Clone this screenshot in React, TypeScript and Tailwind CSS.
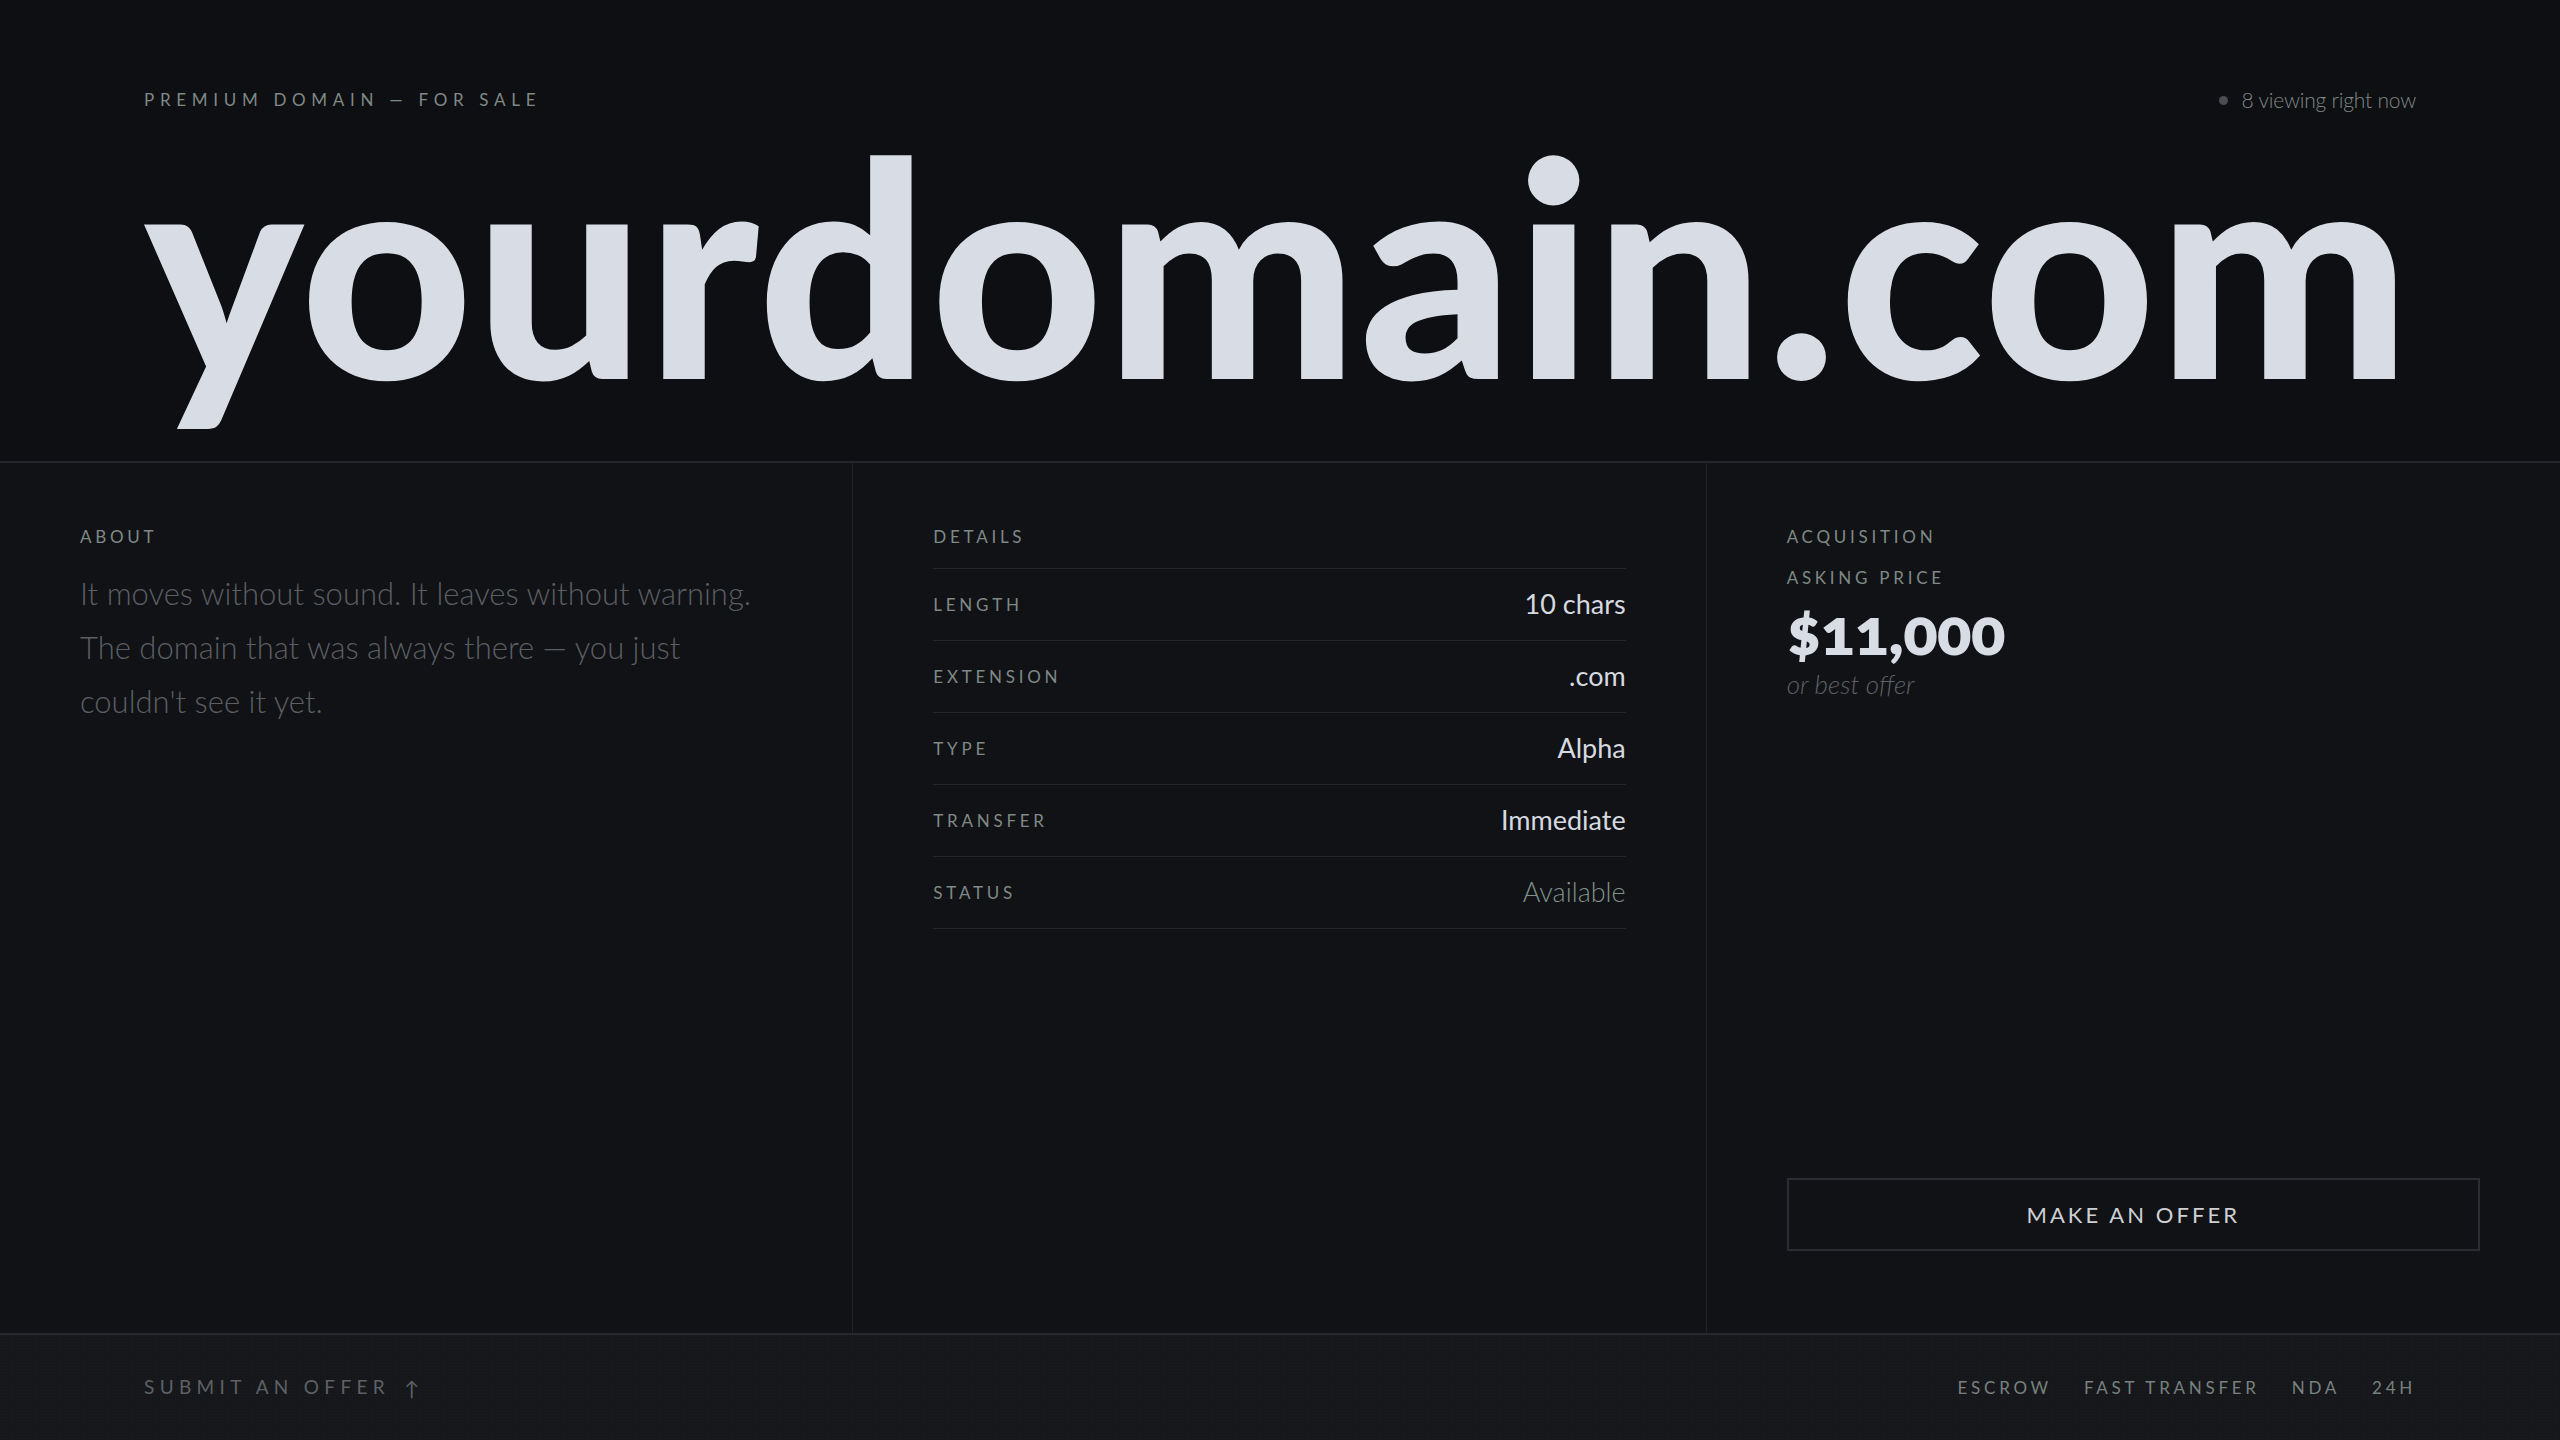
const details: { label: string; value: string; muted?: boolean }[] = [
  { label: "Length", value: "10 chars" },
  { label: "Extension", value: ".com" },
  { label: "Type", value: "Alpha" },
  { label: "Transfer", value: "Immediate" },
  { label: "Status", value: "Available", muted: true },
];

const badges = ["Escrow", "Fast Transfer", "NDA", "24H"];

const label = "text-[17px] leading-[24px] uppercase tracking-[0.22em] text-[#7f8986] font-normal";

export default function App() {
  return (
    <div className="h-screen w-full flex flex-col bg-[#0f1013] overflow-hidden font-['Lato','Liberation_Sans',sans-serif]">
      {/* header */}
      <header className="h-[463px] shrink-0 px-[144px] pt-[88px] border-b-2 border-[#26272d] bg-[#0e0f12]">
        <div className="flex items-center justify-between">
          <div className="text-[17px] leading-[24px] uppercase tracking-[0.335em] text-[#7f8986]">
            Premium Domain — For Sale
          </div>
          <div className="flex items-center gap-[13px] text-[21px] leading-[24px] font-light text-[#7f8986] tracking-[-0.01em]">
            <span className="w-[9px] h-[9px] rounded-full bg-[#4a4c51]" />
            8 viewing right now
          </div>
        </div>
        <h1 className="mt-[31px] text-[300px] leading-[0.8] font-black tracking-[0.005em] text-[#d8dde5] whitespace-nowrap">
          yourdomain.com
        </h1>
      </header>

      {/* panels */}
      <main className="flex-1 grid grid-cols-3 bg-[#111215]">
        <section className="border-r border-[#212226] px-20 pt-[62px]">
          <div className={label}>About</div>
          <p className="mt-[17px] text-[31px] leading-[54px] font-light text-[#5b5f64] whitespace-nowrap">
            It moves without sound. It leaves without warning.
            <br />
            The domain that was always there — you just
            <br />
            couldn't see it yet.
          </p>
        </section>

        <section className="border-r border-[#212226] px-20 pt-[62px]">
          <div className={label}>Details</div>
          <div className="mt-[19px] border-t border-[#25262a]">
            {details.map((d) => (
              <div key={d.label} className="h-[72px] flex items-center justify-between border-b border-[#25262a]">
                <span className={label}>{d.label}</span>
                <span className={`text-[27px] ${d.muted ? "text-[#7f918b] font-light" : "text-[#d6dae0] font-normal"}`}>
                  {d.value}
                </span>
              </div>
            ))}
          </div>
        </section>

        <section className="px-20 pt-[62px] pb-[82px] flex flex-col">
          <div className={label}>Acquisition</div>
          <div className={`mt-[17px] ${label}`}>Asking Price</div>
          <div className="mt-[9px] text-[64px] leading-none font-extrabold text-[#d8dce4] tracking-[-0.01em] oldstyle-nums">
            $11,000
          </div>
          <div className="mt-[7px] text-[26px] leading-[28px] font-light italic text-[#5d6166]">or best offer</div>
          <button className="mt-auto h-[73px] w-full border-2 border-[#2b2d32] text-[22px] uppercase tracking-[0.14em] text-[#cdd1d6] font-normal">
            Make an Offer
          </button>
        </section>
      </main>

      {/* footer */}
      <footer className="h-[107px] shrink-0 flex items-center justify-between px-[144px] border-t-2 border-[#27292e] bg-[#16171a] bg-[radial-gradient(#1b1c20_1px,transparent_1px)] bg-[length:3px_3px]">
        <div className="flex items-center gap-[14px] text-[19px] uppercase tracking-[0.28em] text-[#5d6165]">
          Submit an Offer
          <span className="tracking-normal text-[20px]">↑</span>
        </div>
        <div className="flex items-center gap-[32px]">
          {badges.map((b) => (
            <span key={b} className="text-[17px] uppercase tracking-[0.22em] text-[#77827f]">
              {b}
            </span>
          ))}
        </div>
      </footer>
    </div>
  );
}
